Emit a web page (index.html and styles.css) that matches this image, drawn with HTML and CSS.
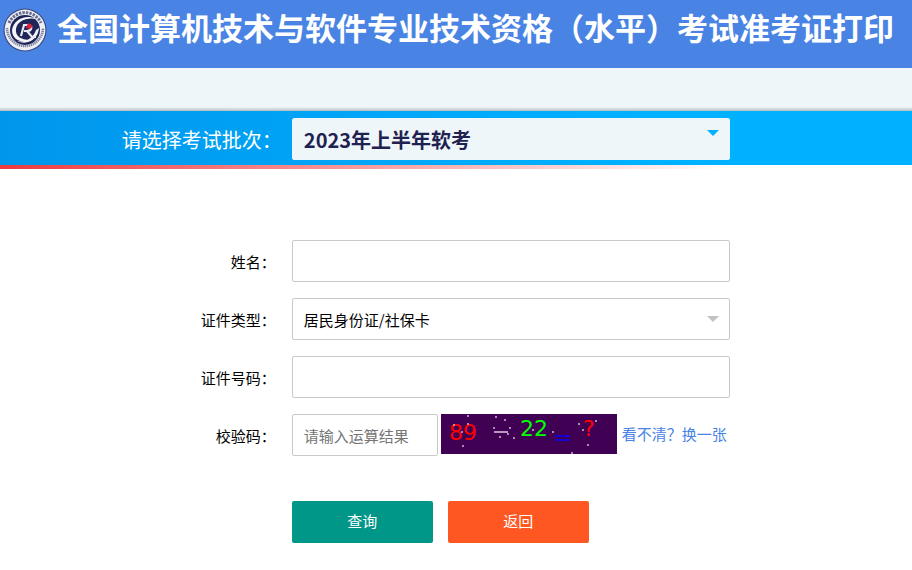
FILE: index.html
```
<!DOCTYPE html>
<html lang="zh-CN">
<head>
  <meta charset="UTF-8">
  <title>准考证打印</title>
  <meta name="viewport" content="width=device-width,initial-scale=1">
  <link rel="stylesheet" href="styles.css">
</head>
<body>

  <!-- 顶部标题 -->
  <header class="header">
    <svg class="logo" viewBox="0 0 44 44" aria-hidden="true">
      <circle cx="22" cy="22" r="21.5" fill="#39477f"/>
      <circle cx="22" cy="22" r="20.4" fill="#eef0f6"/>
      <path d="M6 15A17.5 17.5 0 0 1 38 15" fill="none" stroke="#69718f" stroke-width="3" stroke-dasharray="2.4 1.1"/>
      <path d="M4 20A18 18 0 1 0 40 20" fill="none" stroke="#7b82a0" stroke-width="2.6" stroke-dasharray="1.3 .7"/>
      <circle cx="22" cy="22" r="15" fill="#202557"/>
      <path d="M33 11C23 6 11 11 9 22C9 31 17 36 27 32C18 32 12 28 13 21C14 13 24 9 33 11Z" fill="#f4f5fa"/>
      <path d="M36 20C35 31 25 38 14 33C23 35 31 29 33 22Z" fill="#f4f5fa"/>
      <path d="M18 28L21 17H25C30 17 29 23 24 23H21M24 23L29 29H33" fill="none" stroke="#e6e8f2" stroke-width="2.2"/>
      <path d="M23 20L25 15L27 16L30 18L27 21Z" fill="#d51f3c"/>
    </svg>
    <h1>全国计算机技术与软件专业技术资格（水平）考试准考证打印</h1>
  </header>
  <div class="nav"></div>

  <form action="#" method="post">
    <!-- 考试批次 -->
    <div class="batch">
      <label for="batch">请选择考试批次：</label>
      <div class="select-box">
        <select id="batch" name="batch">
          <option>2023年上半年软考</option>
        </select>
      </div>
    </div>
    <div class="line"></div>

    <div class="query">
      <div class="row">
        <label for="name">姓名：</label>
        <input type="text" id="name" name="name">
      </div>
      <div class="row">
        <label for="cardType">证件类型：</label>
        <div class="select-box">
          <select id="cardType" name="cardType">
            <option>居民身份证/社保卡</option>
          </select>
        </div>
      </div>
      <div class="row">
        <label for="cardNo">证件号码：</label>
        <input type="text" id="cardNo" name="cardNo">
      </div>
      <div class="row">
        <label for="code">校验码：</label>
        <div class="code">
          <input type="text" id="code" name="code" placeholder="请输入运算结果">
          <svg class="captcha" viewBox="0 0 176 40" role="img" aria-label="验证码">
            <rect width="176" height="40" fill="#400053"/>
            <g class="captcha-text">
              <text x="8" y="26" fill="#f00">89</text>
              <text x="79" y="22" fill="#0f0">22</text>
              <text x="142" y="22" fill="#f00">?</text>
            </g>
            <path d="M53 18H67" stroke="#b898c2" stroke-width="2"/>
            <path d="M114 22H129M114 26H129" stroke="#1400d2" stroke-width="2"/>
            <path d="M12 11h2M26 2h2M26 10h2M20 18h2M21 32h2M54 3h2M63 6h2M52 14h2M68 14h2M66 20h2M58 23h2M72 24h2M91 16h2M111 18h2M137 10h2M141 16h2M154 7h2M146 31h2M130 39h2" stroke="#cfb6d6" stroke-width="1.5"/>
          </svg>
          <a href="#">看不清？换一张</a>
        </div>
      </div>
      <div class="buttons">
        <button type="submit" class="btn">查询</button>
        <button type="button" class="btn btn-back">返回</button>
      </div>
    </div>
  </form>

</body>
</html>
```

FILE: styles.css
```
* { box-sizing: border-box; }
body {
  margin: 0;
  background: #fff;
  color: #000;
  font-family: "Noto Sans CJK SC", sans-serif;
  font-size: 15px;
}
input, select, button {
  font-family: inherit;
  font-size: inherit;
}

/* 顶部 */
.header {
  display: flex;
  align-items: flex-start;
  gap: 10px;
  height: 68px;
  padding: 8px 3px;
  background: #4984e4;
}
.logo {
  flex: none;
  width: 44px;
  height: 44px;
}
h1 {
  margin: 0;
  color: #fff;
  font-size: 31px;
  line-height: 38px;
  white-space: nowrap;
}
.nav {
  height: 43px;
  background: linear-gradient(to top, #b5bdc0, #eef6f9 4px);
}

/* 批次 */
.batch {
  display: grid;
  grid-template-columns: 32% 48%;
  align-items: center;
  padding: 7px 0 5px;
  background: linear-gradient(to right, #0096ec, #00b1ff 70%);
}
.batch label {
  padding-right: 10px;
  color: #fff;
  font-size: 20px;
  text-align: right;
}
.batch select {
  border-color: #eef6f9;
  background: #eef6f9;
  color: #1f2250;
  font-size: 20px;
  font-weight: bold;
}
.batch .select-box::after {
  top: 12px;
  border-top-color: #00b1ff;
}
.line {
  height: 4px;
  background: linear-gradient(to right, #ee3a3f, #fff 80%);
}

/* 表单 */
.query {
  display: grid;
  gap: 16px;
  padding-top: 71px;
}
.row {
  display: grid;
  grid-template-columns: 32% 48%;
  align-items: center;
}
.row label {
  padding-right: 16px;
  text-align: right;
}
input, select {
  display: block;
  width: 100%;
  height: 42px;
  padding: 0 11px;
  border: 1px solid #c9c9c9;
  border-radius: 2px;
  background: #fff;
  color: #000;
}
input::placeholder { color: #757575; }
select { appearance: none; }

.select-box { position: relative; }
.select-box::after {
  content: "";
  position: absolute;
  top: 18px;
  right: 11px;
  border: 6px solid transparent;
  border-top-color: #c2c2c2;
  pointer-events: none;
}

/* 校验码 */
.code {
  display: flex;
  align-items: flex-start;
}
.code input {
  flex: none;
  width: calc(100% / 3);
}
.captcha {
  flex: none;
  width: 176px;
  height: 40px;
  margin: 0 5px 0 3px;
}
.captcha-text {
  font-family: "DejaVu Sans", sans-serif;
  font-size: 22px;
}
.code a {
  color: #4984e4;
  line-height: 40px;
  text-decoration: none;
  white-space: nowrap;
}

.buttons {
  display: flex;
  gap: 15px;
  margin: 29px 20% 0 32%;
}
.btn {
  width: 141px;
  height: 42px;
  padding-bottom: 4px;
  border: none;
  border-radius: 2px;
  background: #009688;
  color: #fff;
  cursor: pointer;
}
.btn-back { background: #ff5722; }
```
